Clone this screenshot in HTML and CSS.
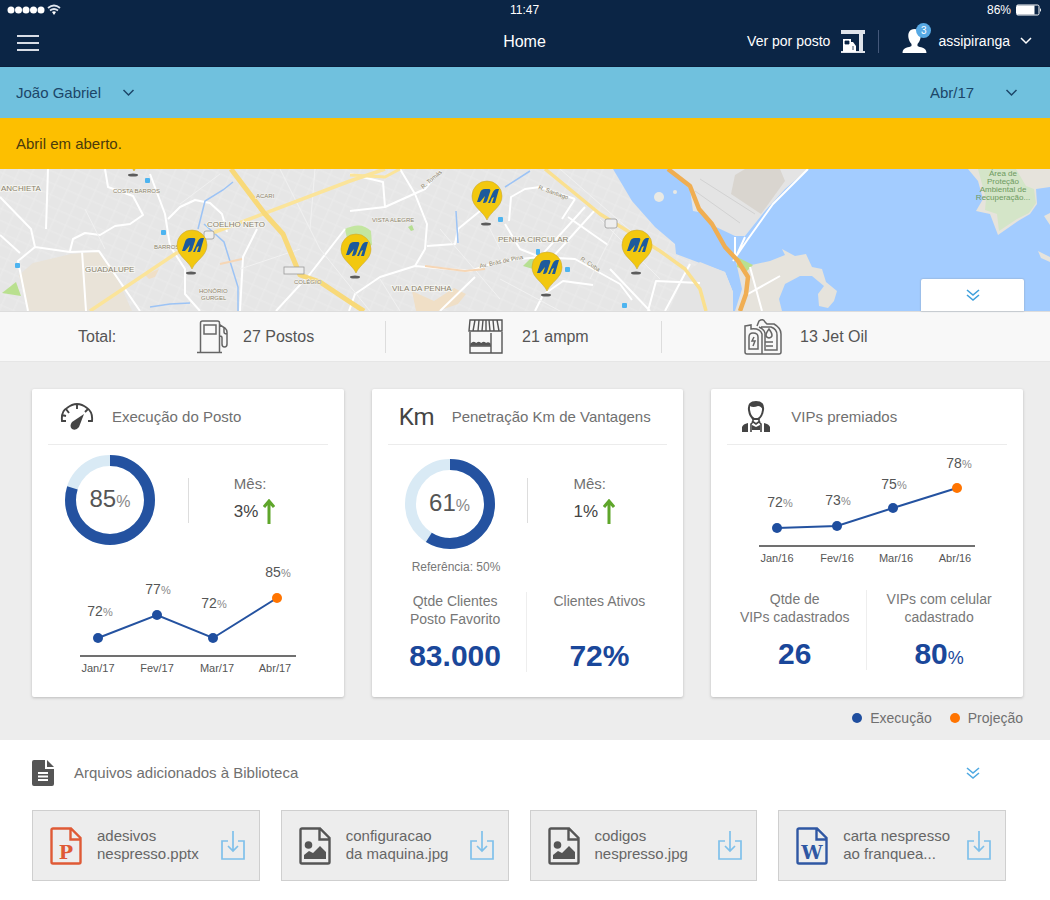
FILE: index.html
```html
<!DOCTYPE html>
<html lang="pt-BR">
<head>
    <meta charset="UTF-8">
    <meta name="viewport" content="width=device-width, initial-scale=1">
    <title>Home</title>
    <link rel="stylesheet" href="styles.css">
</head>
<body>
    <!-- shared icons -->
    <svg class="sprite" aria-hidden="true">
        <symbol id="chevron" viewBox="0 0 12 8"><path d="M1 1l5 5 5-5" fill="none" stroke="currentColor" stroke-width="1.5"/></symbol>
        <symbol id="double-chevron" viewBox="0 0 14 14"><path d="M1 2l6 5 6-5M1 7l6 5 6-5" fill="none" stroke="currentColor" stroke-width="1.6"/></symbol>
        <symbol id="arrow-up" viewBox="0 0 12 26"><path d="M6 25V3M1 8l5-6 5 6" fill="none" stroke="#5fa62b" stroke-width="3"/></symbol>
        <symbol id="download" viewBox="0 0 24 30"><path d="M7 10H1v18h22V10h-6M12 0v20M7 15l5 5 5-5" fill="none" stroke="#7fc0ea" stroke-width="1.7"/></symbol>
        <symbol id="file" viewBox="0 0 32 38"><path d="M3 1.5h18l9.500 9.500v24a1.500 1.500 0 0 1-1.500 1.500H3A1.500 1.500 0 0 1 1.500 35V3A1.500 1.500 0 0 1 3 1.500zM20.500 2v10.500H30" fill="none" stroke="currentColor" stroke-width="2.400"/></symbol>
        <symbol id="file-image" viewBox="0 0 32 38">
            <use href="#file"/>
            <circle cx="9.500" cy="18" r="3.800" fill="currentColor"/>
            <path d="M5 32v-4l5-4 4 2 7-7 6 6v7z" fill="currentColor"/>
        </symbol>
        <symbol id="pin" viewBox="-17 -17 34 52" overflow="visible">
            <ellipse cx="-1" cy="28" rx="5" ry="1.500" fill="#5c5c5c"/>
            <path d="M0 24C-4 15-15 11-15 0a15 15 0 0 1 30 0C15 11 4 15 0 24z" fill="#f2c80f" stroke="#c9a93a" stroke-width=".6"/>
            <path d="M-10 6l3-9q1-4 5-4h4q2 0 1 3L0 5q-1 2-3 2h-1l2-7-5 6z" fill="#1d5a9c"/>
            <path d="M1 7l4-9q2-5 5-5h2L8 7H5l2-6-2 1-2 5z" fill="#1d5a9c"/>
        </symbol>
    </svg>

    <header class="topbar">
        <div class="status">
            <span class="signal">
                <svg width="54" height="12" viewBox="0 0 54 12" fill="#fff" aria-hidden="true">
                    <circle cx="4" cy="6" r="3.500"/><circle cx="11.500" cy="6" r="3.500"/><circle cx="19" cy="6" r="3.500"/><circle cx="26.500" cy="6" r="3.500"/><circle cx="34" cy="6" r="3.500"/>
                    <path d="M41 4q6-5 12 0M43 6.500q4-3 8 0" fill="none" stroke="#dfe5ee" stroke-width="1.800"/><path d="M45 8q2-1.500 4 0l-2 3z"/>
                </svg>
            </span>
            <span>11:47</span>
            <span class="battery">86%
                <svg width="26" height="12" viewBox="0 0 26 12" aria-hidden="true"><rect x=".5" y="1" width="22.500" height="10" rx="1.500" fill="none" stroke="#fff"/><rect x="1" y="1.500" width="17.500" height="9" fill="#fff"/><path d="M24 4q2 2 0 4z" fill="#fff"/></svg>
            </span>
        </div>
        <nav class="nav">
            <button class="menu" type="button" aria-label="Menu"><span></span><span></span><span></span></button>
            <h1>Home</h1>
            <div class="nav-right">
                <a class="station" href="#">Ver por posto
                    <svg width="24" height="23" viewBox="0 0 24 23" aria-hidden="true"><path d="M0 0h24v4H0zM18 4h4v17h2v2H0v-2h18z" fill="#dfe3ea"/><path d="M2 9h8v3h2l3 4v6H2z" fill="#fff"/><path d="M4 11h4v3H4zM12 16v4" fill="#0b2545" stroke="#0b2545" stroke-width=".8"/></svg>
                </a>
                <button class="user" type="button">
                    <span class="avatar">
                        <svg width="26" height="26" viewBox="0 0 26 26" fill="#fff" aria-hidden="true"><path d="M12.500 1c5 0 7 4 6 9-.5 3-2 5-3 6v2c2 1.500 9 1 9 7H.500c0-6 7-5.500 9-7v-2c-1-1-2.500-3-3-6-1-5 1-9 6-9z"/></svg>
                        <span class="badge">3</span>
                    </span>
                    assipiranga
                    <svg width="12" height="8" aria-hidden="true"><use href="#chevron"/></svg>
                </button>
            </div>
        </nav>
    </header>

    <div class="filters">
        <div class="picker">
            <select aria-label="Assessor"><option>João Gabriel</option></select>
            <svg width="13" height="8" aria-hidden="true"><use href="#chevron"/></svg>
        </div>
        <div class="picker picker-month">
            <select aria-label="Mês"><option>Abr/17</option></select>
            <svg width="13" height="8" aria-hidden="true"><use href="#chevron"/></svg>
        </div>
    </div>
    <p class="notice">Abril em aberto.</p>

    <section class="map">
        <svg class="map-canvas" viewBox="0 0 1050 142" preserveAspectRatio="xMidYMid slice" role="img" aria-label="Mapa dos postos">
            <defs>
                <pattern id="streets" width="13" height="11" patternUnits="userSpaceOnUse" patternTransform="rotate(24)"><path d="M0 3h13M5 0v11" stroke="#ececec" stroke-width=".8"/></pattern>
            </defs>
            <rect width="1050" height="142" fill="#e6e6e6"/>
            <rect width="1050" height="142" fill="url(#streets)"/>
            <!-- parks and blocks -->
            <path d="M33 94l38-9 27-2 20 28 14 31H28l-9-36z" fill="#e9e3d8"/>
            <path d="M2 124l14-11 5 14z" fill="#b9e08f"/>
            <path d="M345 60q16-8 26 2l1 14-22 8z" fill="#c3e6a0"/>
            <path d="M523 97l8-8 8 2-6 9zM408 58l4-2 2 5-3 1z" fill="#b6df92"/>
            <path d="M412 122l22 10 20-13 12 6-8 10-20 7h-22zM145 106l14-6-4 8-6 2z" fill="#f0dfc6"/>
            <!-- sea and coast -->
            <path d="M613 0l19 32 23 26 20 17 1 10 24 9 25 9 8 20v19h317V0z" fill="#a3ccff"/>
            <path d="M668 0l22 20 3 22 11 2 12 14 19 9h10l20-25 20-22 23-20z" fill="#e4e4e4"/>
            <path d="M735 6l10-6h35l5 12-24 33-30-20z" fill="#d9d5cf"/>
            <path d="M700 10l55 35M695 22l45 32" stroke="#d2d2d2"/>
            <path d="M735 88l12 9 23-5 15-6-3-6 13 7 11-2 6 13 10 2 4 13 11 9-3 10-6 7-9-2-1-12 6-8-12-10h-12l-15 8-6 15 3 12h-47l7-22z" fill="#e6e3dc"/>
            <path d="M737 88l16 8-6 6-10-4z" fill="#b9e08f"/>
            <path d="M700 93l-15 12-16 37h64v-19l-8-20z" fill="#e4e4e4"/>
            <path d="M968 0l10 12 5 18-7 12 14 3 8 21 20-14 12-7 7-10-1-15 14-2V0z" fill="#e6e3dc"/>
            <path d="M978 0l8 30-1 11 12 4 2 17 18-12 12-6 7-10-2-14-8-3-10-17z" fill="#d4e5c8"/>
            <path d="M1044 47l6-3v12zM1038 82l12 6v5l-9-4z" fill="#e6e3dc"/>
            <circle cx="659" cy="28" r="5" fill="#e9e9e4"/><circle cx="675" cy="23" r="2" fill="#e9e9e4"/>
            <!-- streets -->
            <g fill="none" stroke="#fff" stroke-width="2" stroke-linejoin="round">
                <path d="M0 28l31 32 4 18-17 14 10 50M0 66l20 18M35 78l35 5 29-1 41 60M70 82l3-12 12-6 15 2 15-9 15-2 13-9-10-19-25-9-3-18M82 82l4 60"/>
                <path d="M150 5l15 40 5 32 15 23v25l15 17M168 50l12-12 15-7 15 3 12 11 5 18M257 60l-14 28-3 54M48 0l-2 60M345 60l-35 45-34 37"/>
                <path d="M400 0l15 25 12 30-2 25-10 17-35 11-25 17-6 17M350 42l35-4 40-18 15-18M427 77l28-2 3-15 22-18M415 97l55 5 30-10 40-4 35 2 45 25 12 16M440 142l35-34"/>
                <path d="M509 52l2-24 14-8 15-2 35 12M505 55l15 25 25 10M575 30l-13 20M585 38l-45 50M596 40l-45 50M568 48l40 28M610 100l40 42M535 142l8-16 20-14 30 4M648 142l8-30 44 2M690 95l-25 47M385 38l-2-25-33-8"/>
                <path d="M808 0l-35 35-25 35-15 22M735 68v22M745 68l-10 22M750 98l12 44M748 125l32-18" />
            </g>
            <g fill="none" stroke="#f1f1f1" stroke-width="1">
                <path d="M105 80l-20-40M220 5l-40 30M280 0l40 80 50 62M315 0l-5 60M470 20l30 60M560 0l80 70M600 50l60 60M620 50l-30 60M380 110l20 32M240 100l60-20M500 110l60 32M440 60l60 70"/>
            </g>
            <!-- rivers -->
            <path d="M233 13l-10 8-18 11-7 28M204 55l20 18 14 45v24M530 2l-25 16M456 42l2 32M150 138l20-3 20-1" fill="none" stroke="#9cc3f5" stroke-width="1.500"/>
            <!-- highways -->
            <g fill="none" stroke-linejoin="round">
                <path d="M90 142l85-57 40-22 135-51 35-12" stroke="#fbe49a" stroke-width="3.500"/>
                <path d="M231 0l34 45 18 20 17 41 20 7 30 20 14 9" stroke="#f8d979" stroke-width="5"/>
                <path d="M350 6l35 2 15-8" stroke="#fbe49a" stroke-width="3"/>
                <path d="M545 0l55 45 60 37 25 18 15 20 6 22" stroke="#fae08f" stroke-width="3.500"/>
                <path d="M668 0l22 17 9 23 13 15 13 23 13 14 10 16-2 17-6 17" stroke="#f0ae52" stroke-width="4.500"/>
                <path d="M220 95l22-5M425 97l40 5 20-2" stroke="#f6d6b5" stroke-width="2"/>
            </g>
            <g fill="#4db4f0">
                <rect x="145" y="9" width="5" height="5" rx="1"/><rect x="161" y="61" width="5" height="5" rx="1"/><rect x="15" y="94" width="5" height="5" rx="1"/>
                <rect x="498" y="48" width="5" height="5" rx="1"/><rect x="536" y="80" width="4" height="6" rx="1"/><rect x="565" y="98" width="5" height="5" rx="1"/><rect x="622" y="134" width="5" height="5" rx="1"/>
            </g>
            <g class="map-labels">
                <text x="1" y="22">ANCHIETA</text>
                <text x="207" y="58">COELHO NETO</text>
                <text x="85" y="103">GUADALUPE</text>
                <text x="498" y="73">PENHA CIRCULAR</text>
                <text x="392" y="122">VILA DA PENHA</text>
            </g>
            <g class="map-labels map-labels-small">
                <text x="113" y="24">COSTA BARROS</text>
                <text x="256" y="29">ACARI</text>
                <text x="372" y="53">VISTA ALEGRE</text>
                <text x="154" y="80">BARROS</text>
                <text x="199" y="124">HONÓRIO</text>
                <text x="201" y="131">GURGEL</text>
                <text x="294" y="115">COLÉGIO</text>
                <text x="480" y="99" transform="rotate(-12 480 99)">Av. Brás de Pina</text>
                <text x="538" y="20" transform="rotate(20 538 20)">R. Santiago</text>
                <text x="580" y="91" transform="rotate(32 580 91)">R. Cuba</text>
                <text x="423" y="20" transform="rotate(-40 423 20)">R. Tomás</text>
            </g>
            <g fill="#eee" stroke="#999" stroke-width=".8"><rect x="284" y="98" width="20" height="7"/><rect x="605" y="50" width="12" height="9" rx="2"/><rect x="204" y="62" width="10" height="8" rx="2"/></g>
            <g class="map-labels map-labels-green">
                <text x="1003" y="7">Área de</text>
                <text x="1003" y="15">Proteção</text>
                <text x="1003" y="23">Ambiental de</text>
                <text x="1003" y="31">Recuperação...</text>
            </g>
            <use href="#pin" x="117" y="-39" width="34" height="52"/>
            <use href="#pin" x="175" y="59" width="34" height="52"/>
            <use href="#pin" x="339" y="63" width="34" height="52"/>
            <use href="#pin" x="470" y="10" width="34" height="52"/>
            <use href="#pin" x="530" y="81" width="34" height="52"/>
            <use href="#pin" x="620" y="59" width="34" height="52"/>
        </svg>
        <button class="map-toggle" type="button" aria-label="Expandir mapa"><svg width="14" height="14" aria-hidden="true"><use href="#double-chevron"/></svg></button>
    </section>

    <section class="totals">
        <div class="total-label">Total:</div>
        <div class="total total-first">
            <svg width="32" height="34" viewBox="0 0 32 34" fill="none" stroke="#666" stroke-width="1.500" aria-hidden="true"><path d="M0 32.500h25M3.500 32V3q0-2 2-2h15q2 0 2 2v29M7 5h12v9H7zM23 5l5 3q2 2 2 4v12q0 3-2.500 3T25 24v-6q0-2-2-2M27 8v4q0 2 3 2"/></svg>
            27 Postos
        </div>
        <div class="total">
            <svg width="36" height="36" viewBox="0 0 36 36" fill="none" stroke="#555" stroke-width="1.400" aria-hidden="true"><path d="M2 1h32v11H1zM2 13v21h32V13M23 14v20M2 27h21M7 1L5 12M11 1l-1 11M15 1l-1 11M18 1v11M21 1l1 11M25 1l1 11M29 1l2 11"/><path d="M3 26v-1q3-3 5 0 3-3 5 0 3-3 5 0 2-2 4 0v1z" fill="#555"/></svg>
            21 ampm
        </div>
        <div class="total">
            <svg width="38" height="38" viewBox="0 0 38 38" fill="none" stroke="#666" stroke-width="1.500" aria-hidden="true"><path d="M1 8l6-1 0 4q9-1 11 5v20H3q-2 0-2-2zM5 31V19q0-4 4-4 5 0 5 4v12zM13 8l2-5q4-3 6 1l2 2h7q7 4 7 10v18q0 2-2 2H18M17 9h10q6 2 6 8v15H21V15q-1-4-6-6"/><path d="M25 11q-6 8 0 9 6-1 0-9zM21 24h8M22 28h7M10 19l-2 4h3l-2 5"/></svg>
            13 Jet Oil
        </div>
    </section>

    <main class="dashboard">
        <div class="cards">
            <article class="card">
                <header class="card-head">
                    <span class="card-icon"><svg width="34" height="28" viewBox="0 0 34 28" aria-hidden="true"><path d="M6 18H2Q1 8 7 5q10-8 20 0 6 4 5 13h-4M17 1v5M6 6l3 4M28 6l-3 3M2 12l4 1" fill="none" stroke="#444" stroke-width="1.900"/><path d="M24 11l-5 13q-3 4-7 2-3-3 0-7z" fill="#444"/></svg></span>
                    <h2>Execução do Posto</h2>
                </header>
                <div class="summary">
                    <div class="donut">
                        <svg viewBox="0 0 90 90" aria-hidden="true"><circle class="ring" cx="45" cy="45" r="39.500"/><circle class="ring ring-value" cx="45" cy="45" r="39.500" pathLength="100" stroke-dasharray="80 100"/></svg>
                        <strong>85<small>%</small></strong>
                    </div>
                    <div class="month">Mês:<span>3% <svg width="12" height="26" aria-hidden="true"><use href="#arrow-up"/></svg></span></div>
                </div>
                <svg class="chart" viewBox="0 0 240 120" role="img" aria-label="Execução por mês">
                    <path class="axis" d="M12 93h216"/>
                    <polyline class="line" points="30,75 89,52 145,75 209,35"/>
                    <circle class="dot" cx="30" cy="75" r="5"/><circle class="dot" cx="89" cy="52" r="5"/><circle class="dot" cx="145" cy="75" r="5"/><circle class="dot dot-next" cx="209" cy="35" r="5"/>
                    <g class="values">
                        <text x="32" y="53">72<tspan>%</tspan></text><text x="90" y="31">77<tspan>%</tspan></text><text x="146" y="45">72<tspan>%</tspan></text><text x="210" y="14">85<tspan>%</tspan></text>
                    </g>
                    <g class="months">
                        <text x="30" y="109">Jan/17</text><text x="89" y="109">Fev/17</text><text x="149" y="109">Mar/17</text><text x="207" y="109">Abr/17</text>
                    </g>
                </svg>
            </article>

            <article class="card">
                <header class="card-head">
                    <span class="card-icon km">Km</span>
                    <h2>Penetração Km de Vantagens</h2>
                </header>
                <div class="summary summary-reference">
                    <div class="donut">
                        <svg viewBox="0 0 90 90" aria-hidden="true"><circle class="ring" cx="45" cy="45" r="39.500"/><circle class="ring ring-value" cx="45" cy="45" r="39.500" pathLength="100" stroke-dasharray="59 100"/></svg>
                        <strong>61<small>%</small></strong>
                    </div>
                    <div class="month">Mês:<span>1% <svg width="12" height="26" aria-hidden="true"><use href="#arrow-up"/></svg></span></div>
                </div>
                <p class="reference">Referência: 50%</p>
                <div class="stats">
                    <div class="stat"><p>Qtde Clientes<br>Posto Favorito</p><strong>83.000</strong></div>
                    <div class="stat"><p>Clientes Ativos</p><strong>72%</strong></div>
                </div>
            </article>

            <article class="card">
                <header class="card-head">
                    <span class="card-icon"><svg width="28" height="32" viewBox="0 0 28 32" aria-hidden="true"><path d="M14 1q8 0 7 8-1 7-5 9h-4q-4-2-5-9-1-8 7-8z" fill="none" stroke="#444" stroke-width="2"/><path d="M7 9q-1-8 7-8 8 0 7 8-2-4-5-4-5 2-8 0z" fill="#444"/><path d="M11 18v3l-2 2v8M17 18v3l2 2v8M10 20l4 3 4-3" fill="none" stroke="#444" stroke-width="1.600"/><path d="M0 31v-5q1-3 6-4v9zM28 31v-5q-1-3-6-4v9zM10 24l4 2 4-2v5h-8z" fill="#444"/></svg></span>
                    <h2>VIPs premiados</h2>
                </header>
                <svg class="chart" viewBox="0 0 240 120" role="img" aria-label="VIPs premiados por mês">
                    <path class="axis" d="M12 93h216"/>
                    <polyline class="line" points="30,75 90,73 146,55 210,35"/>
                    <circle class="dot" cx="30" cy="75" r="5"/><circle class="dot" cx="90" cy="73" r="5"/><circle class="dot" cx="146" cy="55" r="5"/><circle class="dot dot-next" cx="210" cy="35" r="5"/>
                    <g class="values">
                        <text x="33" y="54">72<tspan>%</tspan></text><text x="91" y="52">73<tspan>%</tspan></text><text x="147" y="36">75<tspan>%</tspan></text><text x="212" y="15">78<tspan>%</tspan></text>
                    </g>
                    <g class="months">
                        <text x="30" y="109">Jan/16</text><text x="90" y="109">Fev/16</text><text x="149" y="109">Mar/16</text><text x="208" y="109">Abr/16</text>
                    </g>
                </svg>
                <div class="stats">
                    <div class="stat"><p>Qtde de<br>VIPs cadastrados</p><strong>26</strong></div>
                    <div class="stat"><p>VIPs com celular<br>cadastrado</p><strong>80<small>%</small></strong></div>
                </div>
            </article>
        </div>
        <ul class="legend">
            <li>Execução</li>
            <li class="projection">Projeção</li>
        </ul>
    </main>

    <section class="library">
        <header class="library-head">
            <svg width="22" height="26" viewBox="0 0 22 26" aria-hidden="true"><path d="M0 2q0-2 2-2h11v9h9v15q0 2-2 2H2q-2 0-2-2z" fill="#555"/><path d="M15 0l7 7h-7z" fill="#555"/><path d="M6 13h10M6 16.500h10M6 20h10" stroke="#fff" stroke-width="2"/></svg>
            <h2>Arquivos adicionados à Biblioteca</h2>
            <button type="button" aria-label="Ver todos"><svg width="14" height="14" aria-hidden="true"><use href="#double-chevron"/></svg></button>
        </header>
        <div class="files">
            <div class="file">
                <svg class="file-icon ppt" viewBox="0 0 32 38" aria-hidden="true"><use href="#file"/><text x="16" y="32">P</text></svg>
                <p>adesivos<br>nespresso.pptx</p>
                <a href="#" aria-label="Baixar adesivos nespresso.pptx"><svg width="24" height="30" aria-hidden="true"><use href="#download"/></svg></a>
            </div>
            <div class="file">
                <svg class="file-icon" viewBox="0 0 32 38" aria-hidden="true"><use href="#file-image"/></svg>
                <p>configuracao<br>da maquina.jpg</p>
                <a href="#" aria-label="Baixar configuracao da maquina.jpg"><svg width="24" height="30" aria-hidden="true"><use href="#download"/></svg></a>
            </div>
            <div class="file">
                <svg class="file-icon" viewBox="0 0 32 38" aria-hidden="true"><use href="#file-image"/></svg>
                <p>codigos<br>nespresso.jpg</p>
                <a href="#" aria-label="Baixar codigos nespresso.jpg"><svg width="24" height="30" aria-hidden="true"><use href="#download"/></svg></a>
            </div>
            <div class="file">
                <svg class="file-icon doc" viewBox="0 0 32 38" aria-hidden="true"><use href="#file"/><text x="16" y="32">W</text></svg>
                <p>carta nespresso<br>ao franquea...</p>
                <a href="#" aria-label="Baixar carta nespresso ao franqueado"><svg width="24" height="30" aria-hidden="true"><use href="#download"/></svg></a>
            </div>
        </div>
    </section>
</body>
</html>
```
FILE: styles.css
```css
* {
    margin: 0;
    padding: 0;
    box-sizing: border-box;
}
body {
    font: 15px/18px "Liberation Sans", Arial, sans-serif;
    color: #555;
    background: #fff;
}
button, select {
    font: inherit;
    color: inherit;
    background: none;
    border: 0;
    cursor: pointer;
}
a {
    color: inherit;
    text-decoration: none;
}
h1, h2 {
    font-size: 15px;
    font-weight: normal;
}
svg {
    display: block;
    flex: none;
}
.sprite {
    position: absolute;
    width: 0;
    height: 0;
}

/* header */
.topbar {
    background: #0b2545;
    color: #fff;
    border-bottom: 1px solid #0a1f3c;
}
.status, .nav {
    display: grid;
    grid-template-columns: 1fr auto 1fr;
    align-items: center;
}
.status {
    height: 20px;
    padding: 0 8px 0 7px;
    font-size: 12px;
}
.battery {
    display: flex;
    align-items: center;
    justify-content: flex-end;
    gap: 5px;
}
.nav {
    height: 46px;
    padding: 0 18px 4px 17px;
}
.nav h1 {
    padding-top: 2px;
    font-size: 16px;
}
.menu {
    display: grid;
    gap: 5px;
    width: 22px;
    padding-top: 4px;
}
.menu span {
    height: 2px;
    background: #d8dde6;
}
.nav-right {
    display: flex;
    align-items: center;
    justify-content: flex-end;
    font-size: 14px;
}
.station {
    display: flex;
    align-items: center;
    gap: 11px;
    padding-right: 13px;
    border-right: 1px solid #44587a;
}
.user {
    display: flex;
    align-items: center;
    gap: 10px;
    padding-left: 23px;
}
.avatar {
    position: relative;
}
.badge {
    position: absolute;
    top: -5px;
    right: -3px;
    width: 15px;
    border-radius: 50%;
    background: #57a9e4;
    font-size: 10px;
    line-height: 15px;
    text-align: center;
}

/* filters and notice */
.filters {
    display: flex;
    justify-content: space-between;
    align-items: center;
    height: 51px;
    padding: 0 32px 0 16px;
    background: #70c1de;
    color: #1c4668;
}
.picker {
    display: grid;
    align-items: center;
}
.picker > * {
    grid-area: 1 / 1;
}
.picker select {
    appearance: none;
    padding-right: 33px;
}
.picker svg {
    justify-self: end;
    pointer-events: none;
}
.picker-month select {
    padding-right: 43px;
}
.notice {
    padding: 17px 16px 16px;
    background: #fdbf00;
    color: #4a3b0c;
}

/* map */
.map {
    position: relative;
}
.map-canvas {
    width: 100%;
    height: 142px;
}
.map-labels {
    font-size: 8px;
    fill: #8b826c;
    stroke: #f4f4f0;
    stroke-width: 2px;
    paint-order: stroke;
}
.map-labels-small {
    font-size: 6px;
    stroke-width: 1px;
}
.map-labels-green {
    fill: #6d9a5e;
    stroke: none;
    text-anchor: middle;
}
.map-toggle {
    position: absolute;
    right: 26px;
    bottom: 0;
    display: grid;
    place-items: center;
    width: 103px;
    height: 32px;
    background: #fff;
    border-radius: 2px 2px 0 0;
    box-shadow: 0 0 2px #8a9bb0;
    color: #3fa0dc;
}

/* totals */
.totals {
    display: grid;
    grid-template-columns: 197fr 188fr 276fr 389fr;
    align-items: center;
    height: 51px;
    background: #f8f8f8;
    border-top: 1px solid #ddd;
    border-bottom: 1px solid #e6e6e6;
    font-size: 16px;
}
.total-label {
    padding-left: 78px;
}
.total {
    display: flex;
    align-items: center;
    gap: 18px;
    height: 32px;
    padding-left: 82px;
    border-left: 1px solid #ddd;
}
.total-first {
    gap: 14px;
    padding-left: 0;
    border-left: 0;
}

/* cards */
.dashboard {
    padding: 27px 27px 13px 32px;
    background: #ededed;
}
.cards {
    display: grid;
    grid-template-columns: repeat(3, 1fr);
    gap: 28px;
}
.card {
    min-height: 308px;
    background: #fff;
    border-radius: 2px;
    box-shadow: 0 1px 3px #bbb;
}
.card-head {
    display: flex;
    align-items: center;
    gap: 17px;
    height: 56px;
    margin: 0 16px;
    padding-left: 11px;
    border-bottom: 1px solid #ececec;
    color: #707070;
}
.card-icon {
    display: grid;
    place-items: center;
    width: 36px;
}
.km {
    font-family: Roboto, sans-serif;
    font-size: 24px;
    color: #444;
}
.summary {
    display: grid;
    grid-template-columns: 1fr 1fr;
    align-items: center;
    height: 110px;
}
.donut {
    display: grid;
    place-items: center;
}
.donut > * {
    grid-area: 1 / 1;
}
.donut svg {
    width: 90px;
    height: 90px;
}
.summary-reference .donut {
    padding-top: 8px;
}
.ring {
    fill: none;
    stroke: #d9eaf5;
    stroke-width: 11;
}
.ring-value {
    stroke: #2452a0;
    transform: rotate(-90deg);
    transform-origin: center;
}
.donut strong {
    font-size: 24px;
    font-weight: normal;
}
.donut small {
    font-size: 16px;
    color: #888;
}
.month {
    display: grid;
    align-content: center;
    gap: 6px;
    height: 45px;
    padding-left: 45px;
    border-left: 1px solid #ddd;
    color: #707070;
}
.month span {
    display: flex;
    align-items: center;
    gap: 5px;
    font-size: 17px;
    color: #444;
}
.chart {
    width: 240px;
    height: 120px;
    margin: 8px auto 0;
}
.axis {
    stroke: #707070;
    stroke-width: 2;
}
.line {
    fill: none;
    stroke: #2452a0;
    stroke-width: 2;
}
.dot {
    fill: #1f4e9f;
}
.dot-next {
    fill: #ff7400;
}
.values, .months {
    font-size: 14px;
    fill: #555;
    text-anchor: middle;
}
.values tspan {
    font-size: 11px;
    fill: #888;
}
.months {
    font-size: 11px;
}
.reference {
    padding: 4px 0 0 40px;
    font-size: 12px;
    line-height: 16px;
    color: #777;
}
.stats {
    display: grid;
    grid-template-columns: 1fr 1fr;
    margin: 0 12px;
    padding-top: 17px;
    text-align: center;
    font-size: 14px;
    color: #777;
}
.stat {
    display: flex;
    flex-direction: column;
    justify-content: space-between;
    height: 80px;
}
.stat:first-child {
    border-right: 1px solid #eee;
}
.stat strong {
    height: 32px;
    font-size: 30px;
    line-height: 32px;
    color: #1a479a;
}
.stat small {
    font-size: 18px;
    line-height: 18px;
    font-weight: normal;
}
.legend {
    display: flex;
    justify-content: flex-end;
    gap: 18px;
    padding-top: 12px;
    list-style: none;
    font-size: 14px;
    color: #707070;
}
.legend li {
    display: flex;
    align-items: center;
    gap: 8px;
}
.legend li::before {
    content: "";
    width: 10px;
    height: 10px;
    border-radius: 50%;
    background: #1f4e9f;
}
.legend .projection::before {
    background: #ff7400;
}

/* library */
.library {
    padding: 20px 44px 20px 32px;
}
.library-head {
    display: flex;
    align-items: center;
    gap: 20px;
    padding-right: 26px;
    color: #707070;
}
.library-head button {
    margin-left: auto;
    color: #4fa9e2;
}
.files {
    display: grid;
    grid-template-columns: repeat(4, 1fr);
    gap: 21px;
    padding-top: 24px;
}
.file {
    display: flex;
    align-items: center;
    height: 71px;
    padding: 0 14px 0 17px;
    background: #ededed;
    border: 1px solid #cfcfcf;
    color: #666;
}
.file p {
    flex: 1;
    padding: 0 0 2px 15px;
    white-space: nowrap;
}
.file-icon {
    width: 32px;
    height: 38px;
    color: #555;
}
.file-icon text {
    font: bold 19px "DejaVu Serif", serif;
    fill: currentColor;
    text-anchor: middle;
}
.ppt {
    color: #df5a36;
}
.doc {
    color: #2f57a3;
}
```
